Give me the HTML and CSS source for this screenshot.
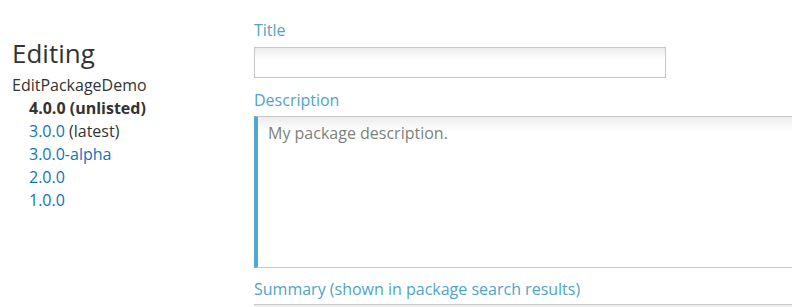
FILE: index.html
```html
<!DOCTYPE html>
<html>
<head>
<meta charset="utf-8">
<link rel="stylesheet" href="styles.css">
</head>
<body>
<div class="page">
  <aside class="side">
    <h1 class="side-title">Editing</h1>
    <div class="pkg">EditPackageDemo</div>
    <ul class="versions">
      <li class="current">4.0.0 (unlisted)</li>
      <li><a href="#">3.0.0</a> (latest)</li>
      <li><a href="#">3.0.0-alpha</a></li>
      <li><a href="#">2.0.0</a></li>
      <li><a href="#">1.0.0</a></li>
    </ul>
  </aside>
  <main class="form">
    <label class="lbl">Title</label>
    <input class="txt" type="text">
    <label class="lbl lbl-desc">Description</label>
    <textarea class="area" placeholder="My package description."></textarea>
    <label class="lbl lbl-sum">Summary (shown in package search results)</label>
    <div class="next"></div>
  </main>
</div>
</body>
</html>
```
FILE: styles.css
```css
html, body {
  margin: 0;
  padding: 0;
  background: #fff;
  overflow: hidden;
}
body {
  font-family: "Open Sans", "Noto Sans", sans-serif;
  font-size: 16px;
  line-height: 23px;
  color: #333;
}
.page {
  display: grid;
  grid-template-columns: 242px 1fr;
  padding-left: 12px;
}
.side {
  padding-top: 36px;
}
.side-title {
  margin: 0;
  font-weight: 400;
  font-size: 26px;
  line-height: 34px;
  color: #333;
}
.pkg {
  margin-top: 4px;
  line-height: 23px;
}
.versions {
  list-style: none;
  margin: 0;
  padding: 0 0 0 17px;
}
.versions li {
  line-height: 23px;
}
.versions .current {
  font-weight: 700;
}
.versions a {
  color: #0f73bd;
  text-decoration: none;
}
.form {
  display: flex;
  flex-direction: column;
  padding-top: 19px;
}
.lbl {
  display: block;
  color: #4ea4cd;
  line-height: 23px;
  margin-bottom: 5px;
}
.lbl-desc {
  margin-top: 11px;
  margin-bottom: 4px;
}
.lbl-sum {
  margin-top: 10px;
  margin-bottom: 3px;
}
.txt {
  box-sizing: border-box;
  width: 412px;
  height: 31px;
  margin: 0;
  border: 1px solid #c8c8c8;
  border-radius: 0;
  background: linear-gradient(#ececec 0, #fff 12px);
  outline: none;
  padding: 0 12px;
  font: inherit;
}
.area {
  box-sizing: border-box;
  width: 560px;
  height: 152px;
  margin: 0;
  border: 1px solid #c8c8c8;
  border-left: 4px solid #52a7d0;
  border-right: none;
  border-radius: 0;
  background: linear-gradient(#ececec 0, #fff 14px);
  padding: 5px 10px;
  font: inherit;
  color: #333;
  resize: none;
  outline: none;
}
.area::placeholder {
  color: #7c817c;
  opacity: 1;
}
.next {
  height: 20px;
  border-top: 1px solid #c8c8c8;
  background: linear-gradient(#ececec 0, #fff 12px);
}
```
